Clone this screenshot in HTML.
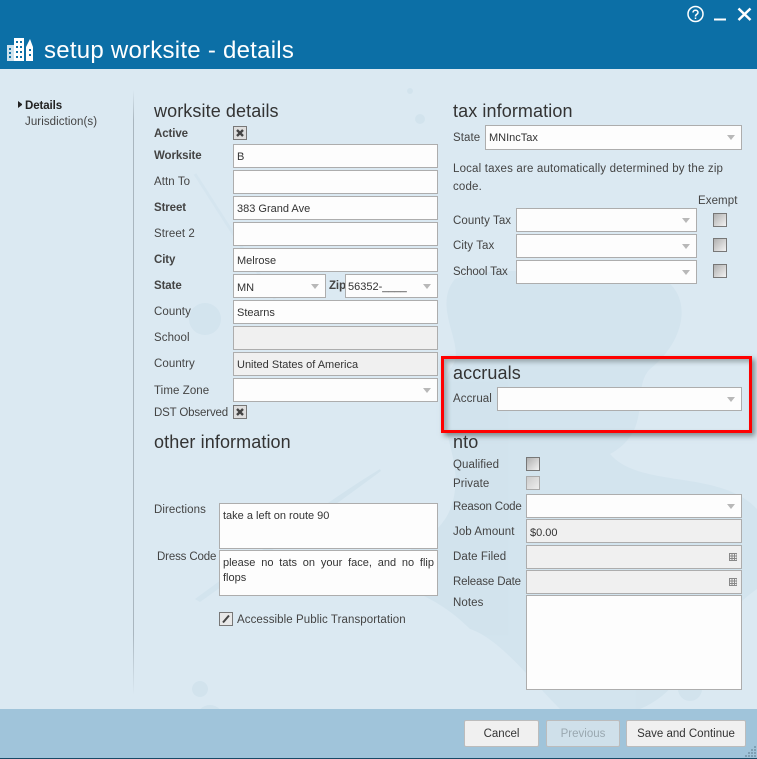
<!DOCTYPE html>
<html><head><meta charset="utf-8"><title>setup worksite - details</title>
<style>
html,body{margin:0;padding:0}
body{width:757px;height:759px;overflow:hidden;position:relative;background:#dbe9f2;font-family:"Liberation Sans",sans-serif;font-size:11.5px;color:#444}
div,span{position:absolute;box-sizing:border-box}
.l{white-space:nowrap;line-height:14px;letter-spacing:.08px;margin-top:1px}
.s{letter-spacing:-.15px}
.b{font-weight:bold;letter-spacing:-.1px}
.h{font-size:18px;line-height:22px;color:#333;white-space:nowrap;letter-spacing:.1px}
.i{background:#fdfdfd;border:1px solid #adadad;color:#333;font-size:11px;line-height:25px;padding-left:3px;white-space:nowrap;height:24px}
.d{background:#f0f0f0}
.a:after{content:"";position:absolute;right:6px;top:9px;border-left:4.5px solid transparent;border-right:4.5px solid transparent;border-top:5px solid #b8b8b8}
.c{width:14px;height:14px;border:1px solid #777;background:linear-gradient(135deg,#b0b0b0,#f2f2f2)}
.c.o{border-color:#aaa;background:linear-gradient(135deg,#ccc,#eee)}
.x{background:#dedede}
.c svg{position:absolute;left:2px;top:2px}
.g{position:absolute;right:4px;top:7px}
.btn{height:27px;top:720px;background:#f0f0f0;border:1px solid #bcbcbc;border-radius:2px;text-align:center;line-height:27px;color:#333}
</style></head><body>
<svg style="position:absolute;left:0;top:69px" width="757" height="690" viewBox="0 0 757 690">
<g fill="#d1e3ed" opacity=".85">
<path d="M455 210C520 190 560 215 625 205C690 195 700 260 650 300C630 320 655 360 610 385C640 420 720 400 757 440V520C700 560 690 620 640 640H560C530 610 500 570 470 560C440 530 410 520 380 510C410 470 450 470 455 420C460 380 430 350 450 300C470 280 430 240 455 210Z"/>
<circle cx="205" cy="250" r="16"/><circle cx="410" cy="22" r="3"/><circle cx="420" cy="50" r="5"/>
<path d="M195 530C250 490 330 430 380 400L381 402C330 440 260 490 200 533Z"/>
<circle cx="200" cy="620" r="8"/><circle cx="210" cy="650" r="14"/><circle cx="690" cy="620" r="12"/>
</g>
<path d="M195 105L275 230" stroke="#d5e5ef" stroke-width="3"/>
</svg>
<div style="left:0;top:0;width:757px;height:69px;background:#0c6fa6"></div>
<svg style="position:absolute;left:5px;top:35px" width="29" height="27" viewBox="0 0 29 27"><g fill="#fff"><rect x="2" y="10" width="7" height="16" opacity=".8"/><rect x="9" y="3" width="10" height="23"/><path d="M21 26V12L25 4L28 12V26Z"/></g><g fill="#0c6fa6"><rect x="4" y="13" width="2" height="2"/><rect x="4" y="17" width="2" height="2"/><rect x="4" y="21" width="2" height="2"/><rect x="11" y="6" width="2" height="2"/><rect x="15" y="6" width="2" height="2"/><rect x="11" y="11" width="2" height="2"/><rect x="15" y="11" width="2" height="2"/><rect x="11" y="16" width="2" height="2"/><rect x="15" y="16" width="2" height="2"/><rect x="11" y="21" width="2" height="2"/><rect x="15" y="21" width="2" height="2"/><rect x="24" y="14" width="2" height="2"/><rect x="24" y="19" width="2" height="2"/></g></svg>
<div style="left:44px;top:36px;font-size:24px;line-height:30px;color:#fff;white-space:nowrap;letter-spacing:.25px">setup worksite - details</div>
<svg style="position:absolute;left:686px;top:5px" width="60" height="19" viewBox="0 0 60 19" fill="none" stroke="#fff"><circle cx="9.500" cy="9" r="7.500" stroke-width="1.500"/><path d="M7 7.500C7 4.500 12 4.500 12 7.500C12 9.500 9.500 9 9.500 11.500" stroke-width="1.500"/><path d="M9.500 12.500V14" stroke-width="1.500"/><path d="M28 14.500H40" stroke-width="2"/></svg>
<svg style="position:absolute;left:737px;top:7px" width="15" height="15" viewBox="0 0 15 15"><path d="M1.500 1.500L13.500 13M13.500 1.500L1.500 13" stroke="#fff" stroke-width="2.500" fill="none"/></svg>

<div style="left:18px;top:101px;border-left:4px solid #222;border-top:3.500px solid transparent;border-bottom:3.500px solid transparent;width:4px;height:7px"></div>
<div class="l b" style="left:25px;top:98px;color:#222">Details</div>
<div class="l" style="left:25px;top:114px">Jurisdiction(s)</div>
<div style="left:133px;top:90px;width:1px;height:605px;background:linear-gradient(#dbe9f2,#a9b6bf 5%,#a9b6bf 90%,#dbe9f2)"></div>

<div class="h" style="left:154px;top:100px">worksite details</div>
<div class="l b" style="left:154px;top:126px">Active</div>
<div class="c x" style="left:233px;top:126px"><svg width="8" height="8" viewBox="0 0 8 8"><path d="M1 1L7 7M7 1L1 7" stroke="#444" stroke-width="2.400"/></svg></div>
<div class="l b" style="left:154px;top:148px">Worksite</div>
<div class="i" style="left:233px;top:144px;width:205px">B</div>
<div class="l" style="left:154px;top:174px">Attn To</div>
<div class="i" style="left:233px;top:170px;width:205px"></div>
<div class="l b" style="left:154px;top:200px">Street</div>
<div class="i" style="left:233px;top:196px;width:205px">383 Grand Ave</div>
<div class="l" style="left:154px;top:226px">Street 2</div>
<div class="i" style="left:233px;top:222px;width:205px"></div>
<div class="l b" style="left:154px;top:252px">City</div>
<div class="i" style="left:233px;top:248px;width:205px">Melrose</div>
<div class="l b" style="left:154px;top:278px">State</div>
<div class="i a" style="left:233px;top:274px;width:93px;line-height:27px">MN</div>
<div class="l b" style="left:329px;top:278px">Zip</div>
<div class="i a" style="left:345px;top:274px;width:93px;padding-left:2px">56352-____</div>
<div class="l" style="left:154px;top:304px">County</div>
<div class="i" style="left:233px;top:300px;width:205px">Stearns</div>
<div class="l" style="left:154px;top:330px">School</div>
<div class="i d" style="left:233px;top:326px;width:205px"></div>
<div class="l" style="left:154px;top:356px">Country</div>
<div class="i d" style="left:233px;top:352px;width:205px">United States of America</div>
<div class="l" style="left:154px;top:383px">Time Zone</div>
<div class="i a" style="left:233px;top:378px;width:205px"></div>
<div class="l s" style="left:154px;top:405px">DST Observed</div>
<div class="c x" style="left:233px;top:405px"><svg width="8" height="8" viewBox="0 0 8 8"><path d="M1 1L7 7M7 1L1 7" stroke="#444" stroke-width="2.400"/></svg></div>

<div class="h" style="left:154px;top:431px">other information</div>
<div class="l" style="left:154px;top:502px">Directions</div>
<div class="i" style="left:219px;top:503px;width:219px;height:46px;line-height:16px;padding:4px 3px">take a left on route 90</div>
<div class="l s" style="left:157px;top:549px">Dress Code</div>
<div class="i" style="left:219px;top:550px;width:219px;height:46px;line-height:14.500px;padding:5px 3px;white-space:normal;text-align:justify">please no tats on your face, and no flip flops</div>
<div class="c" style="left:219px;top:612px;background:#e8e8e8"><svg style="left:1px;top:1px" width="10" height="10" viewBox="0 0 10 10"><path d="M2 8.500L8 1.500" stroke="#444" stroke-width="2"/></svg></div>
<div class="l" style="left:237px;top:612px">Accessible Public Transportation</div>

<div class="h" style="left:453px;top:100px">tax information</div>
<div class="l" style="left:453px;top:130px">State</div>
<div class="i a" style="left:485px;top:125px;width:257px;height:25px;padding-left:3px">MNIncTax</div>
<div class="l" style="left:453px;top:160px;width:290px;line-height:17.500px;white-space:normal;letter-spacing:.17px">Local taxes are automatically determined by the zip code.</div>
<div class="l" style="left:698px;top:193px">Exempt</div>
<div class="l" style="left:453px;top:213px">County Tax</div>
<div class="i a" style="left:516px;top:208px;width:181px"></div>
<div class="c" style="left:713px;top:213px"></div>
<div class="l" style="left:453px;top:238px">City Tax</div>
<div class="i a" style="left:516px;top:234px;width:181px"></div>
<div class="c" style="left:713px;top:238px"></div>
<div class="l s" style="left:453px;top:264px">School Tax</div>
<div class="i a" style="left:516px;top:260px;width:181px"></div>
<div class="c" style="left:713px;top:264px"></div>

<div style="left:441px;top:356px;width:311px;height:77px;border:3px solid #f00;box-shadow:3px 3px 5px rgba(80,90,90,.65),inset 3px 3px 5px rgba(80,90,90,.45)"></div>
<div class="h" style="left:453px;top:362px">accruals</div>
<div class="l" style="left:453px;top:391px">Accrual</div>
<div class="i a" style="left:497px;top:387px;width:245px"></div>

<div class="h" style="left:453px;top:431px">nto</div>
<div class="l" style="left:453px;top:457px">Qualified</div>
<div class="c" style="left:526px;top:457px"></div>
<div class="l" style="left:453px;top:476px">Private</div>
<div class="c o" style="left:526px;top:476px"></div>
<div class="l s" style="left:453px;top:499px">Reason Code</div>
<div class="i a" style="left:526px;top:494px;width:216px"></div>
<div class="l" style="left:453px;top:524px">Job Amount</div>
<div class="i d" style="left:526px;top:519px;width:216px;line-height:26px">$0.00</div>
<div class="l" style="left:453px;top:549px">Date Filed</div>
<div class="i d" style="left:526px;top:545px;width:216px"><svg class="g" width="8" height="8" viewBox="0 0 8 8"><path d="M.5 0V8M3 0V8M5.500 0V8M8 0V8M0 .5H8M0 3H8M0 5.500H8M0 7.500H8" stroke="#888" stroke-width="1"/></svg></div>
<div class="l s" style="left:453px;top:574px">Release Date</div>
<div class="i d" style="left:526px;top:570px;width:216px"><svg class="g" width="8" height="8" viewBox="0 0 8 8"><path d="M.5 0V8M3 0V8M5.500 0V8M8 0V8M0 .5H8M0 3H8M0 5.500H8M0 7.500H8" stroke="#888" stroke-width="1"/></svg></div>
<div class="l" style="left:453px;top:595px">Notes</div>
<div class="i" style="left:526px;top:595px;width:216px;height:95px"></div>

<div style="left:0;top:709px;width:757px;height:49px;background:#a0c4da"></div>
<div style="left:0;top:758px;width:757px;height:1px;background:#1a4a66"></div>
<svg style="position:absolute;left:744px;top:745px" width="13" height="13" viewBox="0 0 13 13"><path d="M10 1h2v2h-2zM10 4h2v2h-2zM7 4h2v2H7zM10 7h2v2h-2zM7 7h2v2H7zM4 7h2v2H4zM10 10h2v2h-2zM7 10h2v2H7zM4 10h2v2H4zM1 10h2v2H1z" fill="#7f9fb3"/></svg>
<div class="btn" style="left:464px;width:75px">Cancel</div>
<div class="btn" style="left:546px;width:74px;background:#cfe0ea;color:#9aa8b0">Previous</div>
<div class="btn" style="left:626px;width:120px">Save and Continue</div>
</body></html>
